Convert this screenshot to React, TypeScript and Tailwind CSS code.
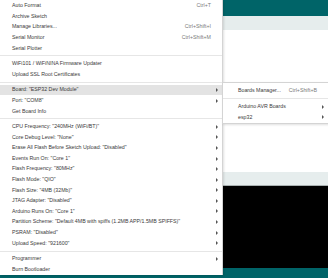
import React from 'react';

type Entry = { label?: string; shortcut?: string; arrow?: boolean; active?: boolean; sep?: boolean };

const mainMenu: Entry[] = [
  { label: 'Auto Format', shortcut: 'Ctrl+T' },
  { label: 'Archive Sketch' },
  { label: 'Manage Libraries...', shortcut: 'Ctrl+Shift+I' },
  { label: 'Serial Monitor', shortcut: 'Ctrl+Shift+M' },
  { label: 'Serial Plotter' },
  { sep: true },
  { label: 'WiFi101 / WiFiNINA Firmware Updater' },
  { label: 'Upload SSL Root Certificates' },
  { sep: true },
  { label: 'Board: "ESP32 Dev Module"', arrow: true, active: true },
  { label: 'Port: "COM8"', arrow: true },
  { label: 'Get Board Info' },
  { sep: true },
  { label: 'CPU Frequency: "240MHz (WiFi/BT)"', arrow: true },
  { label: 'Core Debug Level: "None"', arrow: true },
  { label: 'Erase All Flash Before Sketch Upload: "Disabled"', arrow: true },
  { label: 'Events Run On: "Core 1"', arrow: true },
  { label: 'Flash Frequency: "80MHz"', arrow: true },
  { label: 'Flash Mode: "QIO"', arrow: true },
  { label: 'Flash Size: "4MB (32Mb)"', arrow: true },
  { label: 'JTAG Adapter: "Disabled"', arrow: true },
  { label: 'Arduino Runs On: "Core 1"', arrow: true },
  { label: 'Partition Scheme: "Default 4MB with spiffs (1.2MB APP/1.5MB SPIFFS)"', arrow: true },
  { label: 'PSRAM: "Disabled"', arrow: true },
  { label: 'Upload Speed: "921600"', arrow: true },
  { sep: true },
  { label: 'Programmer', arrow: true },
  { label: 'Burn Bootloader' },
];

const boardsMenu: Entry[] = [
  { label: 'Boards Manager...', shortcut: 'Ctrl+Shift+B' },
  { sep: true },
  { label: 'Arduino AVR Boards', arrow: true },
  { label: 'esp32', arrow: true },
];

const Arrow = () => (
  <span className="block w-0 h-0 border-y-[2px] border-y-transparent border-l-[2.5px] border-l-[#555]" />
);

const MenuList = ({ entries, indent }: { entries: Entry[]; indent: string }) => (
  <>
    {entries.map((e, i) =>
      e.sep ? (
        <div key={i} className="h-[5px] flex items-center">
          <div className="h-px w-full bg-[#e6e6e6]" />
        </div>
      ) : (
        <div
          key={i}
          className={`h-[10.6px] flex items-center ${indent} ${e.active ? 'bg-[#e3e3e3]' : ''}`}
        >
          <span className="whitespace-nowrap text-[#3a3a3a]">{e.label}</span>
          {e.shortcut && <span className="ml-auto whitespace-nowrap text-[#7a7a7a]">{e.shortcut}</span>}
          <span className={`w-[11px] pl-[5px] flex items-center ${e.shortcut ? '' : 'ml-auto'}`}>
            {e.arrow && <Arrow />}
          </span>
        </div>
      )
    )}
  </>
);

export default function App() {
  return (
    <div
      className="relative w-[328px] h-[278px] overflow-hidden bg-white text-[5.25px] leading-none"
      style={{ fontFamily: '"Liberation Sans", Arial, sans-serif' }}
    >
      {/* IDE window behind the menu */}
      <div className="flex flex-col h-full">
        <div className="h-[16px] bg-[#006468]" />
        <div className="h-[14px] bg-[#e6eded]" />
        <div className="flex-1 bg-white" />
        <div className="h-[14px] bg-[#e6eded] border-b border-[#a9b1b1]" />
        <div className="h-[82px] bg-black" />
        <div className="h-[10px] bg-[#006468]" />
      </div>

      {/* Tools menu */}
      <div className="absolute left-0 top-0 w-[223px] h-[275px] pt-[0.5px] bg-white border-r border-[#d4d4d4] shadow-[1px_1px_2px_rgba(0,0,0,0.12)]">
        <MenuList entries={mainMenu} indent="pl-[12px]" />
      </div>

      {/* Board submenu */}
      <div className="absolute left-[222px] top-[82px] w-[107px] h-[42px] pt-[2.7px] bg-white border border-[#d4d4d4] shadow-[1px_1px_2px_rgba(0,0,0,0.12)]">
        <MenuList entries={boardsMenu} indent="pl-[15px]" />
      </div>
    </div>
  );
}
